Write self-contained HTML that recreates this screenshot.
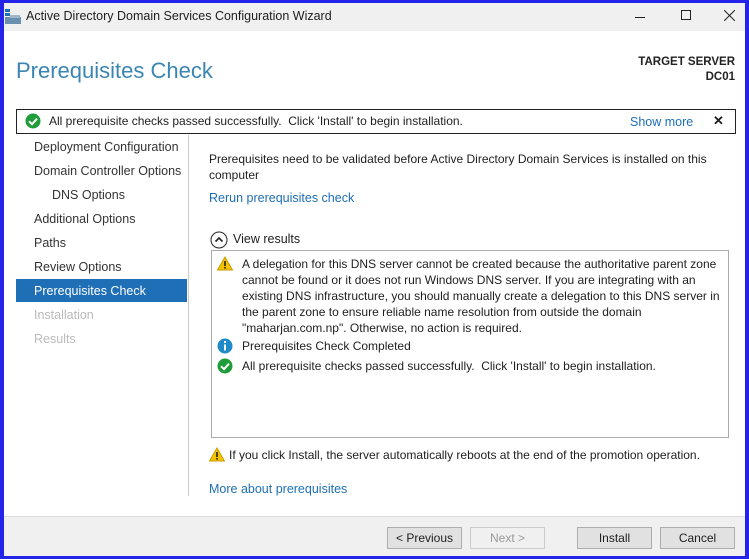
<!DOCTYPE html>
<html><head><meta charset="utf-8"><style>
*{margin:0;padding:0;box-sizing:border-box}
body{width:749px;height:559px;background:#2424e8;position:relative;overflow:hidden;font-family:"Liberation Sans",sans-serif;font-size:12px;color:#1e1e1e}
.win{position:absolute;left:4px;top:3px;width:741px;height:553px;background:#fff}
.tb{position:absolute;left:0;top:0;width:741px;height:28px;background:#f0f0f0}
.a{position:absolute;white-space:nowrap}
.nav{position:absolute;left:30px;font-size:12.5px;color:#333}
.lnk{color:#1e6eb5}
.btn{position:absolute;top:524px;height:22px;background:#e1e1e1;border:1px solid #adadad;text-align:center;line-height:20px;font-size:12px}
</style></head><body>
<div class="win">
<div class="tb">
<svg class="a" style="left:1px;top:6px" width="16" height="16"><rect x="0" y="0" width="5" height="3" fill="#1e6eb5"/><rect x="0" y="4" width="5" height="3" fill="#1e6eb5"/><rect x="0" y="8" width="16" height="7" fill="#6a8fb0"/><rect x="5" y="6" width="10" height="3" fill="#9fb6c9"/></svg>
<div class="a" style="left:22px;top:6px;font-size:12.5px">Active Directory Domain Services Configuration Wizard</div>
<div class="a" style="left:631px;top:14px;width:10px;height:1px;background:#222"></div>
<div class="a" style="left:677px;top:7px;width:10px;height:10px;border:1px solid #222"></div>
<svg class="a" style="left:720px;top:7px" width="11" height="11"><path d="M0 0L11 11M11 0L0 11" stroke="#222" stroke-width="1"/></svg>
</div>
<div class="a" style="left:12px;top:55px;font-size:22px;color:#3a85b3">Prerequisites Check</div>
<div class="a" style="right:10px;top:52px;font-size:12px;text-align:right;line-height:15px;color:#222;font-weight:bold;font-size:11.5px">TARGET SERVER<br>DC01</div>
<div class="a" style="left:12px;top:106px;width:720px;height:25px;border:1px solid #222"></div>
<svg class="a" style="left:21px;top:110px" width="16" height="16"><circle cx="8" cy="8" r="7.5" fill="#1f9d3a"/><path d="M4 8.2l3 3 5-5.5" stroke="#fff" stroke-width="2" fill="none"/></svg>
<div class="a" style="left:45px;top:111px;font-size:12px">All prerequisite checks passed successfully.&nbsp; Click 'Install' to begin installation.</div>
<div class="a lnk" style="left:626px;top:112px;font-size:12.5px">Show more</div>
<div class="a" style="left:709px;top:110px;font-size:13px;font-weight:bold">✕</div>
<div class="nav" style="top:137px">Deployment Configuration</div>
<div class="nav" style="top:161px">Domain Controller Options</div>
<div class="nav" style="top:185px;left:48px">DNS Options</div>
<div class="nav" style="top:209px">Additional Options</div>
<div class="nav" style="top:233px">Paths</div>
<div class="nav" style="top:257px">Review Options</div>
<div class="a" style="left:12px;top:276px;width:171px;height:23px;background:#1e6fb5"></div>
<div class="nav" style="top:281px;color:#fff">Prerequisites Check</div>
<div class="nav" style="top:305px;color:#bbb">Installation</div>
<div class="nav" style="top:329px;color:#bbb">Results</div>
<div class="a" style="left:184px;top:132px;width:1px;height:361px;background:#ccc"></div>
<div class="a" style="left:205px;top:148px;line-height:16px;font-size:12px">Prerequisites need to be validated before Active Directory Domain Services is installed on this<br>computer</div>
<div class="a lnk" style="left:205px;top:188px;font-size:12.5px">Rerun prerequisites check</div>
<svg class="a" style="left:206px;top:228px" width="18" height="18"><circle cx="9" cy="9" r="8" fill="none" stroke="#222"/><path d="M5.5 10.5l3.5-3.5 3.5 3.5" stroke="#222" stroke-width="1.6" fill="none"/></svg>
<div class="a" style="left:229px;top:229px;font-size:12.5px">View results</div>
<div class="a" style="left:207px;top:247px;width:518px;height:188px;border:1px solid #aaa"></div>
<svg class="a" style="left:213px;top:253px" width="16" height="15"><path d="M8 1L15.5 14H.5z" fill="#f5c400" stroke="#c99a00"/><rect x="7.2" y="5" width="1.6" height="5" fill="#222"/><rect x="7.2" y="11" width="1.6" height="1.6" fill="#222"/></svg>
<div class="a" style="left:238px;top:253px;line-height:16px;font-size:12px">A delegation for this DNS server cannot be created because the authoritative parent zone<br>cannot be found or it does not run Windows DNS server. If you are integrating with an<br>existing DNS infrastructure, you should manually create a delegation to this DNS server in<br>the parent zone to ensure reliable name resolution from outside the domain<br>"maharjan.com.np". Otherwise, no action is required.</div>
<svg class="a" style="left:213px;top:335px" width="16" height="16"><circle cx="8" cy="8" r="7.5" fill="#1e8bc8"/><rect x="7" y="3" width="2" height="2" fill="#fff"/><rect x="7" y="6.5" width="2" height="6" fill="#fff"/></svg>
<div class="a" style="left:238px;top:336px;font-size:12px">Prerequisites Check Completed</div>
<svg class="a" style="left:213px;top:355px" width="16" height="16"><circle cx="8" cy="8" r="7.5" fill="#1f9d3a"/><path d="M4 8.2l3 3 5-5.5" stroke="#fff" stroke-width="2" fill="none"/></svg>
<div class="a" style="left:238px;top:356px;font-size:12px">All prerequisite checks passed successfully.&nbsp; Click 'Install' to begin installation.</div>
<svg class="a" style="left:205px;top:444px" width="16" height="15"><path d="M8 1L15.5 14H.5z" fill="#f5c400" stroke="#c99a00"/><rect x="7.2" y="5" width="1.6" height="5" fill="#222"/><rect x="7.2" y="11" width="1.6" height="1.6" fill="#222"/></svg>
<div class="a" style="left:225px;top:445px;font-size:12px">If you click Install, the server automatically reboots at the end of the promotion operation.</div>
<div class="a lnk" style="left:205px;top:479px;font-size:12.5px">More about prerequisites</div>
<div class="a" style="left:0;top:513px;width:741px;height:40px;background:#f0f0f0;border-top:1px solid #dcdcdc"></div>
<div class="btn" style="left:383px;width:75px">&lt; Previous</div>
<div class="btn" style="left:466px;width:75px;background:#f0f0f0;border-color:#ccc;color:#999">Next &gt;</div>
<div class="btn" style="left:573px;width:75px">Install</div>
<div class="btn" style="left:656px;width:75px">Cancel</div>
</div>
</body></html>
